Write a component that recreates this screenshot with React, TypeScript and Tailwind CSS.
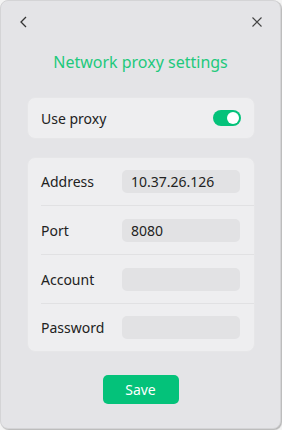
import React from "react";

export default function App() {
  const rows: { label: string; value: string; h: string }[] = [
    { label: "Address", value: "10.37.26.126", h: "h-[48px]" },
    { label: "Port", value: "8080", h: "h-[49px]" },
    { label: "Account", value: "", h: "h-[49px]" },
    { label: "Password", value: "", h: "h-[47px]" },
  ];
  return (
    <div
      className="w-[282px] h-[430px] bg-[#f4f4f4]"
      style={{ fontFamily: '"Noto Sans", "Open Sans", sans-serif' }}
    >
      <div className="w-[281px] h-[429px] rounded-[8px] bg-[#e4e4e7] border border-[#d4d4d6] shadow-[1px_1px_1px_rgba(0,0,0,0.25)] flex flex-col">
        <div className="flex items-center justify-between px-[16px] pt-[11px] h-[30px]">
          <svg width="12" height="14" viewBox="0 0 12 14" className="ml-[1px]">
            <path d="M8 2 L3 7 L8 12" fill="none" stroke="#333" strokeWidth="1.3" />
          </svg>
          <svg width="12" height="12" viewBox="0 0 12 12" className="mr-[1px]">
            <path d="M1.5 1.5 L10.5 10.5 M10.5 1.5 L1.5 10.5" fill="none" stroke="#444" strokeWidth="1.1" />
          </svg>
        </div>
        <div className="text-center text-[16px] text-[#1ec97c] mt-[19px] leading-[24px]">
          Network proxy settings
        </div>
        <div className="ml-[26px] w-[228px] mt-[23px] h-[42px] rounded-[8px] bg-[#eeeef0] border border-[#e6e6e8] flex items-center justify-between pl-[13px] pr-[13px]">
          <span className="text-[14px] text-[#222]">Use proxy</span>
          <div className="w-[28px] h-[16px] rounded-full bg-[#04c27a] flex items-center justify-end pr-[2px]">
            <div className="w-[12px] h-[12px] rounded-full bg-white" />
          </div>
        </div>
        <div className="ml-[26px] w-[228px] mt-[18px] rounded-[8px] bg-[#eeeef0] border border-[#e6e6e8] pl-[13px]">
          {rows.map((r, i) => (
            <div
              key={r.label}
              className={
                r.h +
                " flex items-center " +
                (i < rows.length - 1 ? "border-b border-[#e1e1e3]" : "")
              }
            >
              <span className="w-[81px] text-[14px] text-[#222]">{r.label}</span>
              <div className="w-[118px] h-[23px] rounded-[5px] bg-[#e2e2e4] flex items-center px-[9px] text-[14px] text-[#222]">
                {r.value}
              </div>
            </div>
          ))}
        </div>
        <div className="flex justify-center mt-[23px]">
          <button className="w-[76px] h-[29px] rounded-[5px] bg-[#04c27a] text-white text-[14px]">
            Save
          </button>
        </div>
      </div>
    </div>
  );
}
